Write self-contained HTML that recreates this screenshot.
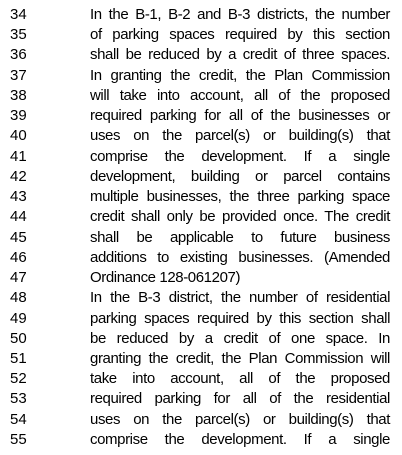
<!DOCTYPE html>
<html><head><meta charset="utf-8"><style>
html,body{margin:0;padding:0;background:#fff;width:402px;height:455px;overflow:hidden}
body{font-family:"Liberation Sans",sans-serif;font-size:15px;color:#000;letter-spacing:-0.4px}
.wrap{position:absolute;top:5px;left:0;width:402px}
.l{height:20.24px;line-height:20.24px;position:relative}
.n{position:absolute;left:10px;top:0;letter-spacing:0}
.t{position:absolute;left:90px;width:300px;top:0;text-align:justify;text-align-last:justify;white-space:nowrap}
.t.s{text-align-last:left}
</style></head><body><div class="wrap">
<div class="l" style="position:absolute;top:-24px;width:402px"><div class="t">required parking (Amended Ordinance 128-061207)</div></div>
<div class="l"><span class="n">34</span><div class="t">In the B-1, B-2 and B-3 districts, the number</div></div>
<div class="l"><span class="n">35</span><div class="t">of parking spaces required by this section</div></div>
<div class="l"><span class="n">36</span><div class="t">shall be reduced by a credit of three spaces.</div></div>
<div class="l"><span class="n">37</span><div class="t">In granting the credit, the Plan Commission</div></div>
<div class="l"><span class="n">38</span><div class="t">will take into account, all of the proposed</div></div>
<div class="l"><span class="n">39</span><div class="t">required parking for all of the businesses or</div></div>
<div class="l"><span class="n">40</span><div class="t">uses on the parcel(s) or building(s) that</div></div>
<div class="l"><span class="n">41</span><div class="t">comprise the development. If a single</div></div>
<div class="l"><span class="n">42</span><div class="t">development, building or parcel contains</div></div>
<div class="l"><span class="n">43</span><div class="t">multiple businesses, the three parking space</div></div>
<div class="l"><span class="n">44</span><div class="t">credit shall only be provided once. The credit</div></div>
<div class="l"><span class="n">45</span><div class="t">shall be applicable to future business</div></div>
<div class="l"><span class="n">46</span><div class="t">additions to existing businesses. (Amended</div></div>
<div class="l"><span class="n">47</span><div class="t s">Ordinance 128-061207)</div></div>
<div class="l"><span class="n">48</span><div class="t">In the B-3 district, the number of residential</div></div>
<div class="l"><span class="n">49</span><div class="t">parking spaces required by this section shall</div></div>
<div class="l"><span class="n">50</span><div class="t">be reduced by a credit of one space. In</div></div>
<div class="l"><span class="n">51</span><div class="t">granting the credit, the Plan Commission will</div></div>
<div class="l"><span class="n">52</span><div class="t">take into account, all of the proposed</div></div>
<div class="l"><span class="n">53</span><div class="t">required parking for all of the residential</div></div>
<div class="l"><span class="n">54</span><div class="t">uses on the parcel(s) or building(s) that</div></div>
<div class="l"><span class="n">55</span><div class="t">comprise the development. If a single</div></div>
</div></body></html>
